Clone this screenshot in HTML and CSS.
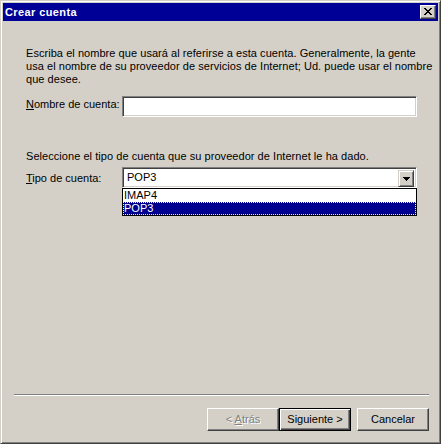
FILE: index.html
```html
<!DOCTYPE html>
<html lang="es">
<head>
<meta charset="utf-8">
<title>Crear cuenta</title>
<link rel="stylesheet" href="styles.css">
</head>
<body>
<div class="window">
  <div class="titlebar">
    <span class="title">Crear cuenta</span>
    <div class="close-btn">
      <svg width="8" height="7" viewBox="0 0 8 7" shape-rendering="crispEdges">
        <path d="M0 0h2v1h-2z M6 0h2v1h-2z M1 1h2v1h-2z M5 1h2v1h-2z M2 2h4v1h-4z M3 3h2v1h-2z M2 4h4v1h-4z M1 5h2v1h-2z M5 5h2v1h-2z M0 6h2v1h-2z M6 6h2v1h-2z" fill="#000"/>
      </svg>
    </div>
  </div>
  <div class="content">
    <p class="intro">Escriba el nombre que usará al referirse a esta cuenta. Generalmente, la gente<br>usa el nombre de su proveedor de servicios de Internet; Ud. puede usar el nombre<br>que desee.</p>
    <div class="field-row first">
      <label class="field-label"><u>N</u>ombre de cuenta:</label>
      <div class="edit"></div>
    </div>
    <p class="intro second">Seleccione el tipo de cuenta que su proveedor de Internet le ha dado.</p>
    <div class="field-row combo-row">
      <label class="field-label combo-label"><u>T</u>ipo de cuenta:</label>
      <div class="combo-wrap">
        <div class="combo">
          <span class="combo-value">POP3</span>
          <div class="drop-btn">
            <svg width="7" height="4" viewBox="0 0 7 4" shape-rendering="crispEdges">
              <path d="M0 0h7v1h-7z M1 1h5v1h-5z M2 2h3v1h-3z M3 3h1v1h-1z" fill="#000"/>
            </svg>
          </div>
        </div>
        <div class="droplist">
          <div class="option">IMAP4</div>
          <div class="option selected">POP3</div>
        </div>
      </div>
    </div>
  </div>
  <div class="footer">
    <div class="separator"></div>
    <div class="buttons">
      <div class="btn disabled"><span>&lt; <u>A</u>trás</span></div>
      <div class="btn default"><span>Siguiente &gt;</span></div>
      <div class="btn cancel"><span>Cancelar</span></div>
    </div>
  </div>
</div>
</body>
</html>
```

FILE: styles.css
```css
* { box-sizing: border-box; }
html, body { margin: 0; padding: 0; background: #d4d0c8; }
body {
  font-family: "Liberation Sans", Arial, sans-serif;
  font-size: 11px;
  line-height: 13px;
  color: #000;
}
.window {
  width: 441px;
  height: 444px;
  background: #d4d0c8;
  border: 1px solid;
  border-color: #d4d0c8 #404040 #404040 #d4d0c8;
  box-shadow: inset 1px 1px #fff, inset -1px -1px #808080;
  padding: 2px;
  display: flex;
  flex-direction: column;
}
.titlebar {
  height: 18px;
  background: #000096;
  display: flex;
  align-items: flex-start;
  justify-content: space-between;
}
.title {
  color: #fff;
  font-weight: bold;
  line-height: 18px;
  padding-left: 2px;
  letter-spacing: 0.4px;
}
.close-btn {
  width: 16px;
  height: 14px;
  margin: 2px 2px 0 0;
  background: #d4d0c8;
  border: 1px solid;
  border-color: #fff #404040 #404040 #fff;
  box-shadow: inset -1px -1px #808080;
  display: flex;
  align-items: center;
  justify-content: center;
  padding: 0 1px 1px 0;
}
.close-btn svg { display: block; }
.content {
  flex: 1;
  padding: 0 21px 0 23px;
}
.intro {
  margin: 26px 0 0 0;
  white-space: nowrap;
  letter-spacing: 0.05px;
}
.intro.second { margin-top: 33px; }
.field-row {
  display: flex;
  align-items: flex-start;
}
.field-row.first { margin-top: 10px; }
.field-row.combo-row { margin-top: 4px; }
.field-label {
  width: 96px;
  padding-top: 2px;
}
.combo-label { padding-top: 5px; }
.edit {
  width: 295px;
  height: 21px;
  background: #fff;
  border: 1px solid;
  border-color: #808080 #fff #fff #808080;
  box-shadow: inset 1px 1px #404040, inset -1px -1px #d4d0c8;
}
.combo-wrap {
  position: relative;
  width: 295px;
}
.combo {
  height: 21px;
  background: #fff;
  border: 1px solid;
  border-color: #808080 #fff #fff #808080;
  box-shadow: inset 1px 1px #404040, inset -1px -1px #d4d0c8;
  display: flex;
  align-items: flex-start;
  padding: 2px 2px 2px 4px;
}
.combo-value {
  flex: 1;
  line-height: 15px;
}
.drop-btn {
  width: 16px;
  height: 17px;
  background: #d4d0c8;
  border: 1px solid;
  border-color: #d4d0c8 #404040 #404040 #d4d0c8;
  box-shadow: inset 1px 1px #fff, inset -1px -1px #808080;
  display: flex;
  align-items: center;
  justify-content: center;
}
.drop-btn svg { display: block; }
.droplist {
  position: absolute;
  left: 0;
  top: 21px;
  width: 295px;
  background: #fff;
  border: 1px solid #000;
}
.option {
  height: 13px;
  line-height: 13px;
  padding-left: 1px;
}
.option.selected {
  background: #000090;
  color: #fff;
  outline: 1px dotted #ffff80;
  outline-offset: -1px;
}
.footer {
  padding-bottom: 10px;
}
.separator {
  height: 2px;
  margin: 0 9px 0 11px;
  border-top: 1px solid #808080;
  border-bottom: 1px solid #fff;
}
.buttons {
  display: flex;
  justify-content: flex-end;
  margin-top: 12px;
  padding-right: 9px;
}
.btn {
  width: 72px;
  height: 23px;
  border: 1px solid;
  border-color: #fff #404040 #404040 #fff;
  box-shadow: inset -1px -1px #808080;
  display: flex;
  align-items: center;
  justify-content: center;
  padding-bottom: 1px;
}
.btn.disabled {
  color: #808080;
  text-shadow: 1px 1px #fff;
}
.btn.default {
  border: 1px solid #000;
  box-shadow: inset 1px 1px #fff, inset -1px -1px #404040, inset -2px -2px #808080;
}
.btn.cancel { margin-left: 6px; }
```
